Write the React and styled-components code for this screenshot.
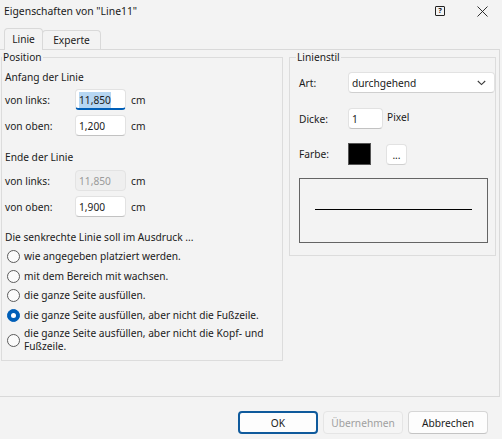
import React from "react";
import styled, { createGlobalStyle, css } from "styled-components";

const GlobalStyle = createGlobalStyle`
  html, body { margin: 0; padding: 0; background: #f3f3f3; }
  body {
    font-family: "Noto Sans", "Open Sans", sans-serif;
    font-size: 10.2px;
    color: #1b1b1b;
  }
  * { box-sizing: border-box; }
`;

const Dialog = styled.div`
  width: 502px;
  height: 439px;
  background: #f3f3f3;
  display: flex;
  flex-direction: column;
  overflow: hidden;
`;

const TitleBar = styled.div`
  height: 22px;
  display: flex;
  align-items: center;
  justify-content: space-between;
  padding: 0 14px 0 4px;
`;

const Title = styled.span`
  font-size: 10.4px;
  color: #1a1a1a;
`;

const TitleControls = styled.div`
  display: flex;
  align-items: center;
  gap: 32px;
`;

const HelpIcon = styled.span`
  width: 10px;
  height: 10px;
  border: 1.2px solid #222;
  border-radius: 1px;
  display: flex;
  align-items: center;
  justify-content: center;
  font-size: 7.5px;
  font-weight: 700;
  line-height: 1;
  color: #222;
`;

const TabStrip = styled.div`
  height: 27px;
  display: flex;
  align-items: flex-end;
  padding-left: 4px;
  position: relative;
  z-index: 1;
`;

const Tab = styled.div`
  display: flex;
  align-items: center;
  justify-content: center;
  background: #f3f3f3;
  border: 1px solid #d9d9d9;
  border-bottom: none;
  border-radius: 4px 4px 0 0;
  ${(p) =>
    p.$active
      ? css`
          width: 39px;
          height: 22px;
          margin-bottom: -1px;
          padding-bottom: 1px;
        `
      : css`
          width: 59px;
          height: 19px;
          margin-left: -1px;
        `}
`;

const Panel = styled.div`
  width: 500px;
  height: 348px;
  border: 1px solid #d9d9d9;
  border-left: none;
  display: flex;
  align-items: flex-start;
  gap: 6px;
  padding-left: 1px;
`;

const GroupBox = styled.fieldset`
  margin: 0;
  padding: 0;
  min-width: 0;
  border: 1px solid #dcdcdc;
  width: ${(p) => p.$w}px;
  height: ${(p) => p.$h}px;
`;

const Legend = styled.legend`
  padding: 0 1px;
  margin-left: ${(p) => p.$ml || 0}px;
  line-height: 14px;
  font-size: 10.2px;
`;

const GroupBody = styled.div`
  padding-left: ${(p) => p.$pl}px;
  display: flex;
  flex-direction: column;
`;

const Heading = styled.div`
  line-height: 16px;
  margin-top: ${(p) => p.$mt}px;
`;

const FieldRow = styled.div`
  display: grid;
  grid-template-columns: ${(p) => p.$cols};
  align-items: center;
  height: ${(p) => p.$h || 21}px;
  margin-top: ${(p) => p.$mt}px;
`;

const Unit = styled.span`
  padding-left: ${(p) => p.$pl || 5}px;
  ${(p) => p.$raised && css`margin-top: -3px;`}
`;

const TextBox = styled.div`
  height: 21px;
  width: ${(p) => p.$w}px;
  background: #ffffff;
  border: 1px solid #e2e2e2;
  border-bottom-color: #c2c2c2;
  border-radius: 4px;
  padding-left: 3px;
  display: flex;
  align-items: center;
  ${(p) =>
    p.$focused &&
    css`
      border-bottom: 2px solid #005fb8;
      padding-top: 1px;
    `}
  ${(p) =>
    p.$disabled &&
    css`
      background: #efefef;
      border-color: #e3e3e3;
      color: #9a9a9a;
    `}
`;

const Selected = styled.span`
  background: #b6d6f2;
  color: #1b1b1b;
  padding: 1px 0;
`;

const RadioRow = styled.div`
  display: flex;
  align-items: center;
  gap: 4px;
  padding-left: 2px;
  min-height: 19.5px;
  margin-top: ${(p) => p.$mt || 0}px;
`;

const RadioCircle = styled.span`
  width: 13px;
  height: 13px;
  flex: none;
  border-radius: 50%;
  border: 1px solid #5b5b5b;
  background: #fbfbfb;
  position: relative;
  ${(p) =>
    p.$checked &&
    css`
      background: #005fb8;
      border-color: #005fb8;
      &::after {
        content: "";
        position: absolute;
        left: 3px;
        top: 3px;
        width: 5px;
        height: 5px;
        border-radius: 50%;
        background: #ffffff;
      }
    `}
`;

const RadioLabel = styled.span`
  line-height: 13px;
`;

const Select = styled.div`
  height: 21px;
  width: 148px;
  background: #ffffff;
  border: 1px solid #e2e2e2;
  border-bottom-color: #cfcfcf;
  border-radius: 4px;
  display: flex;
  align-items: center;
  justify-content: space-between;
  padding: 0 8px 0 3px;
`;

const InlineRow = styled.div`
  display: flex;
  align-items: center;
  height: ${(p) => p.$h || 21}px;
  margin-top: ${(p) => p.$mt}px;
`;

const RowLabel = styled.span`
  width: 49px;
  flex: none;
`;

const Swatch = styled.span`
  width: 23px;
  height: 22px;
  background: #000000;
  border: 1px solid #555555;
`;

const SmallButton = styled.div`
  width: 21px;
  height: 21px;
  margin-left: 15px;
  background: #ffffff;
  border: 1px solid #e2e2e2;
  border-bottom-color: #cfcfcf;
  border-radius: 4px;
  display: flex;
  align-items: center;
  justify-content: center;
  line-height: 1;
  padding-top: 2px;
`;

const Preview = styled.div`
  width: 189px;
  height: 65px;
  margin-top: 13px;
  border: 1px solid #646464;
  display: flex;
  align-items: center;
  padding: 0 15px 3px;
`;

const PreviewLine = styled.div`
  flex: 1;
  height: 1px;
  background: #000000;
`;

const Footer = styled.div`
  display: flex;
  justify-content: flex-end;
  gap: 5px;
  padding: 14px 14px 0 0;
`;

const Button = styled.div`
  width: 80px;
  height: 23px;
  display: flex;
  align-items: center;
  justify-content: center;
  background: #fdfdfd;
  border: 1px solid #d6d6d6;
  border-bottom-color: #c4c4c4;
  border-radius: 4px;
  color: #1b1b1b;
  ${(p) =>
    p.$default &&
    css`
      border: 2px solid #0f5a9c;
    `}
  ${(p) =>
    p.$disabled &&
    css`
      background: #f5f5f5;
      border-color: #e5e5e5;
      color: #a0a0a0;
    `}
`;

const radios = [
  { label: "wie angegeben platziert werden." },
  { label: "mit dem Bereich mit wachsen." },
  { label: "die ganze Seite ausfüllen." },
  { label: "die ganze Seite ausfüllen, aber nicht die Fußzeile.", checked: true },
];

export default function App() {
  return (
    <>
      <GlobalStyle />
      <Dialog>
        <TitleBar>
          <Title>Eigenschaften von "Line11"</Title>
          <TitleControls>
            <HelpIcon>?</HelpIcon>
            <svg width="11" height="11" viewBox="0 0 11 11">
              <path d="M0.5 0.5 L10.5 10.5 M10.5 0.5 L0.5 10.5" stroke="#1a1a1a" strokeWidth="0.9" />
            </svg>
          </TitleControls>
        </TitleBar>

        <TabStrip>
          <Tab $active>Linie</Tab>
          <Tab>Experte</Tab>
        </TabStrip>

        <Panel>
          <GroupBox $w={282} $h={311}>
            <Legend>Position</Legend>
            <GroupBody $pl={3}>
              <Heading $mt={5}>Anfang der Linie</Heading>
              <FieldRow $cols="70px 51px auto" $mt={4}>
                <span>von links:</span>
                <TextBox $w={51} $focused>
                  <Selected>11,850</Selected>
                </TextBox>
                <Unit>cm</Unit>
              </FieldRow>
              <FieldRow $cols="70px 51px auto" $mt={5}>
                <span>von oben:</span>
                <TextBox $w={51}>1,200</TextBox>
                <Unit>cm</Unit>
              </FieldRow>

              <Heading $mt={13}>Ende der Linie</Heading>
              <FieldRow $cols="70px 51px auto" $mt={5}>
                <span>von links:</span>
                <TextBox $w={51} $disabled>11,850</TextBox>
                <Unit>cm</Unit>
              </FieldRow>
              <FieldRow $cols="70px 51px auto" $mt={5}>
                <span>von oben:</span>
                <TextBox $w={51}>1,900</TextBox>
                <Unit>cm</Unit>
              </FieldRow>

              <Heading $mt={12}>Die senkrechte Linie soll im Ausdruck ...</Heading>
              {radios.map((r, i) => (
                <RadioRow key={i} $mt={i === 0 ? 2 : 0}>
                  <RadioCircle $checked={r.checked} />
                  <RadioLabel>{r.label}</RadioLabel>
                </RadioRow>
              ))}
              <RadioRow $mt={2}>
                <RadioCircle />
                <RadioLabel>
                  die ganze Seite ausfüllen, aber nicht die Kopf- und
                  <br />
                  Fußzeile.
                </RadioLabel>
              </RadioRow>
            </GroupBody>
          </GroupBox>

          <GroupBox $w={207} $h={206}>
            <Legend $ml={6}>Linienstil</Legend>
            <GroupBody $pl={9}>
              <InlineRow $mt={8}>
                <RowLabel>Art:</RowLabel>
                <Select>
                  <span>durchgehend</span>
                  <svg width="9" height="6" viewBox="0 0 9 6">
                    <path d="M0.8 1 L4.5 4.6 L8.2 1" fill="none" stroke="#3a3a3a" strokeWidth="1.1" />
                  </svg>
                </Select>
              </InlineRow>
              <InlineRow $mt={15}>
                <RowLabel>Dicke:</RowLabel>
                <TextBox $w={35}>1</TextBox>
                <Unit $pl={4} $raised>Pixel</Unit>
              </InlineRow>
              <InlineRow $mt={14} $h={22}>
                <RowLabel>Farbe:</RowLabel>
                <Swatch />
                <SmallButton>...</SmallButton>
              </InlineRow>
              <Preview>
                <PreviewLine />
              </Preview>
            </GroupBody>
          </GroupBox>
        </Panel>

        <Footer>
          <Button $default>OK</Button>
          <Button $disabled>Übernehmen</Button>
          <Button>Abbrechen</Button>
        </Footer>
      </Dialog>
    </>
  );
}
